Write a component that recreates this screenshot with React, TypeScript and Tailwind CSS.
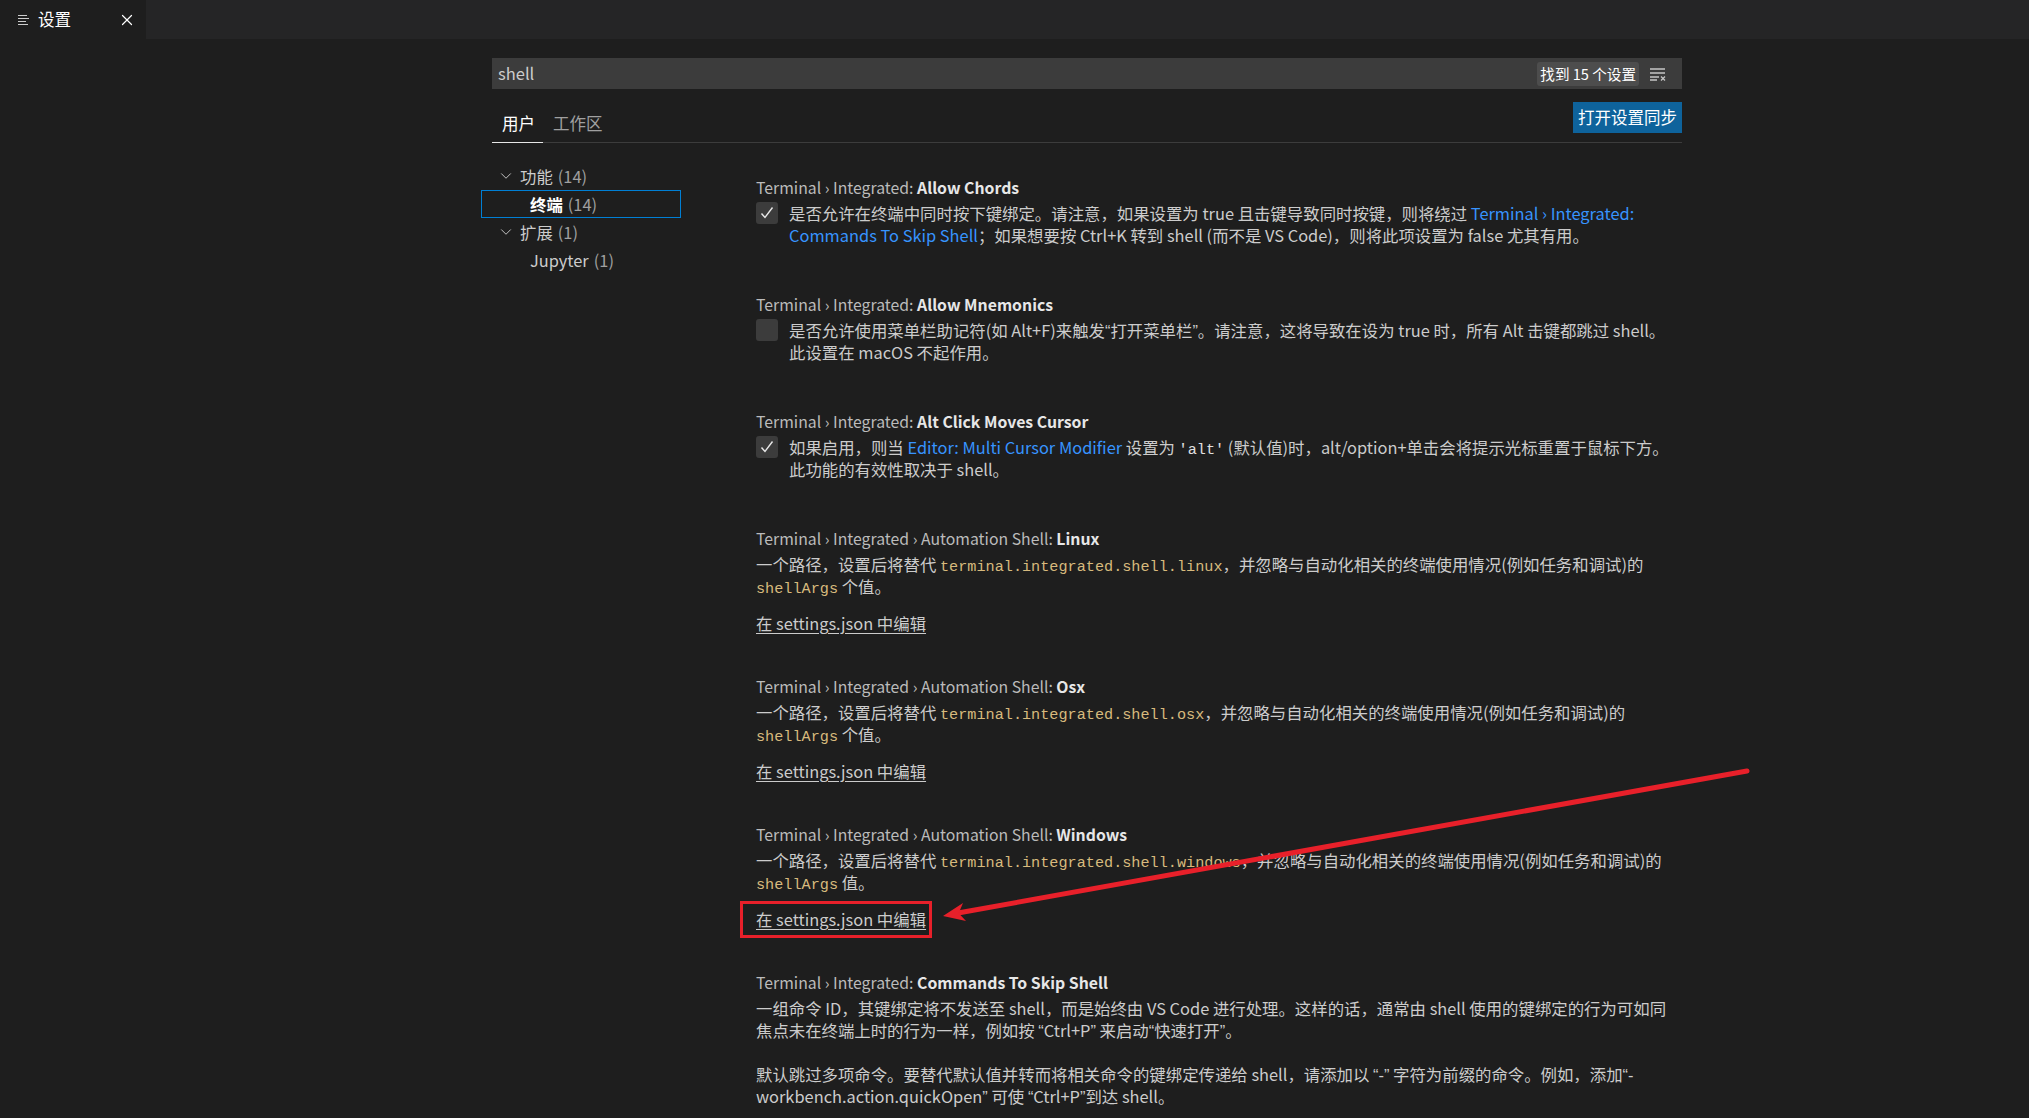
import React from 'react';
import { ChevronDown, X } from 'lucide-react';

const Code = ({ children }: { children: React.ReactNode }) => (
  <code className="font-['Liberation_Mono',monospace] text-[15.2px] leading-none text-[#d7ba7d]">{children}</code>
);

const Link = ({ children }: { children: React.ReactNode }) => <span className="text-[#3794ff]">{children}</span>;

// narrow latin quotes, like the original UI font
const Q = ({ children }: { children: React.ReactNode }) => (
  <span className="font-['Liberation_Sans',sans-serif]">{children}</span>
);

const Checkbox = ({ checked }: { checked: boolean }) => (
  <div className="w-[22px] h-[22px] shrink-0 mr-[11px] rounded-[3px] bg-[#3c3c3c] flex items-center justify-center">
    {checked && (
      <svg width="16" height="16" viewBox="0 0 16 16" fill="none">
        <path d="M2.5 8.5 L6 12.5 L13.5 2.5" stroke="#e8e8e8" strokeWidth="1.4" />
      </svg>
    )}
  </div>
);

interface SettingProps {
  category: string;
  name: string;
  checkbox?: 'on' | 'off';
  lines: React.ReactNode[];
  extra?: React.ReactNode[];
  jsonLink?: boolean;
  highlight?: boolean;
}

const Setting = ({ category, name, checkbox, lines, extra, jsonLink, highlight }: SettingProps) => (
  <div className={jsonLink ? 'pb-[42px]' : 'pb-[48px]'}>
    <div className="h-[22px] leading-[22px] text-[15.8px] text-[#bbbbbb] whitespace-nowrap">
      {category} <span className="font-bold text-[#e7e7e7]">{name}</span>
    </div>
    <div className="mt-[3px] flex">
      {checkbox && <Checkbox checked={checkbox === 'on'} />}
      <div className="text-[#cccccc] text-[16.4px]">
        {lines.map((l, i) => (
          <div key={i} className="h-[22px] leading-[22px] whitespace-nowrap">{l}</div>
        ))}
        {extra && (
          <div className="mt-[22px]">
            {extra.map((l, i) => (
              <div key={i} className="h-[22px] leading-[22px] whitespace-nowrap">{l}</div>
            ))}
          </div>
        )}
      </div>
    </div>
    {jsonLink && (
      <div className="mt-[15px] h-[22px] leading-[22px] relative">
        <span className="text-[16.4px] text-[#cccccc] underline underline-offset-[3px]">在 settings.json 中编辑</span>
        {highlight && (
          <span className="absolute left-[-16px] top-[-7px] w-[192px] h-[37px] border-[3px] border-[#e8202a]" />
        )}
      </div>
    )}
  </div>
);

const TocRow = ({ label, count, level, expanded, selected }: { label: string; count: number; level: number; expanded?: boolean; selected?: boolean }) => (
  <div
    className={`h-[28px] flex items-center text-[16.4px] ${level === 0 ? 'pl-[15px]' : 'pl-[48px]'} ${selected ? 'border border-[#007fd4]' : 'border border-transparent'}`}
  >
    {level === 0 && expanded && <ChevronDown size={18} strokeWidth={1.3} className="text-[#c5c5c5] mr-[5px]" />}
    <span className={selected ? 'font-bold text-white' : 'text-[#cccccc]'}>{label}</span>
    <span className="ml-[5px] text-[#a0a0a0]">({count})</span>
  </div>
);

export default function App() {
  return (
    <div className="relative w-[2029px] h-[1118px] overflow-hidden bg-[#1e1e1e] font-['Noto_Sans_CJK_SC',sans-serif]">
      {/* tab bar */}
      <div className="h-[39px] bg-[#252526] flex">
        <div className="w-[146px] bg-[#1e1e1e] flex items-center pl-[18px]">
          <svg width="12" height="12" viewBox="0 0 12 12" fill="none">
            <path d="M0 1.5 H9 M0 4.5 H11 M0 7.5 H8 M0 10.5 H10" stroke="#cccccc" strokeWidth="1.2" />
          </svg>
          <span className="ml-[8px] text-[16.5px] text-white">设置</span>
          <X size={18} strokeWidth={1.6} className="ml-auto mr-[10px] text-white" />
        </div>
      </div>

      <div className="pl-[481px]">
        {/* search + tabs */}
        <div className="ml-[11px] w-[1190px]">
          <div className="mt-[19px] h-[31px] bg-[#3c3c3c] flex items-center pl-[6px] pr-[15px]">
            <span className="text-[16.5px] text-[#cccccc]">shell</span>
            <span className="ml-auto h-[24px] px-[3px] rounded-[3px] bg-[#4d4d4d] text-white text-[14.6px] leading-[24px]">找到 15 个设置</span>
            <svg className="ml-[10px]" width="18" height="14" viewBox="0 0 18 14" fill="none">
              <path d="M1 2 H16 M1 6 H16 M1 10 H10 M1 13 H8" stroke="#c5c5c5" strokeWidth="1.3" />
              <path d="M12 9.5 L16 13.5 M16 9.5 L12 13.5" stroke="#c5c5c5" strokeWidth="1.3" />
            </svg>
          </div>
          <div className="h-[54px] flex items-end justify-between border-b border-[#3c3c3c]">
            <div className="flex text-[16.5px] leading-[22px]">
              <div className="pl-[10px] pr-[8px] pb-[8px] text-white border-b border-[#e7e7e7] mb-[-1px]">用户</div>
              <div className="pl-[10px] pr-[8px] pb-[8px] text-[#a0a0a0]">工作区</div>
            </div>
            <button className="mb-[9px] h-[31px] px-[5px] bg-[#0e639c] text-white text-[16.5px] leading-[31px]">打开设置同步</button>
          </div>
        </div>

        {/* body */}
        <div className="flex">
          <div className="w-[200px] pt-[19px] shrink-0">
            <TocRow label="功能" count={14} level={0} expanded />
            <TocRow label="终端" count={14} level={1} selected />
            <TocRow label="扩展" count={1} level={0} expanded />
            <TocRow label="Jupyter" count={1} level={1} />
          </div>
          <div className="ml-[75px] pt-[34px]">
            <Setting
              category="Terminal › Integrated:"
              name="Allow Chords"
              checkbox="on"
              lines={[
                <>是否允许在终端中同时按下键绑定。请注意，如果设置为 true 且击键导致同时按键，则将绕过 <Link>Terminal › Integrated:</Link></>,
                <><Link>Commands To Skip Shell</Link>；如果想要按 Ctrl+K 转到 shell (而不是 VS Code)，则将此项设置为 false 尤其有用。</>,
              ]}
            />
            <Setting
              category="Terminal › Integrated:"
              name="Allow Mnemonics"
              checkbox="off"
              lines={[
                <>是否允许使用菜单栏助记符(如 Alt+F)来触发<Q>“</Q>打开菜单栏<Q>”</Q>。请注意，这将导致在设为 true 时，所有 Alt 击键都跳过 shell。</>,
                <>此设置在 macOS 不起作用。</>,
              ]}
            />
            <Setting
              category="Terminal › Integrated:"
              name="Alt Click Moves Cursor"
              checkbox="on"
              lines={[
                <>如果启用，则当 <Link>Editor: Multi Cursor Modifier</Link> 设置为 <code className="font-['Liberation_Mono',monospace] text-[15.2px] leading-none text-[#e0e0e0]">'alt'</code> (默认值)时，alt/option+单击会将提示光标重置于鼠标下方。</>,
                <>此功能的有效性取决于 shell。</>,
              ]}
            />
            <Setting
              category="Terminal › Integrated › Automation Shell:"
              name="Linux"
              lines={[
                <>一个路径，设置后将替代 <Code>terminal.integrated.shell.linux</Code>，并忽略与自动化相关的终端使用情况(例如任务和调试)的</>,
                <><Code>shellArgs</Code> 个值。</>,
              ]}
              jsonLink
            />
            <Setting
              category="Terminal › Integrated › Automation Shell:"
              name="Osx"
              lines={[
                <>一个路径，设置后将替代 <Code>terminal.integrated.shell.osx</Code>，并忽略与自动化相关的终端使用情况(例如任务和调试)的</>,
                <><Code>shellArgs</Code> 个值。</>,
              ]}
              jsonLink
            />
            <Setting
              category="Terminal › Integrated › Automation Shell:"
              name="Windows"
              lines={[
                <>一个路径，设置后将替代 <Code>terminal.integrated.shell.windows</Code>，并忽略与自动化相关的终端使用情况(例如任务和调试)的</>,
                <><Code>shellArgs</Code> 值。</>,
              ]}
              jsonLink
              highlight
            />
            <Setting
              category="Terminal › Integrated:"
              name="Commands To Skip Shell"
              lines={[
                <>一组命令 ID，其键绑定将不发送至 shell，而是始终由 VS Code 进行处理。这样的话，通常由 shell 使用的键绑定的行为可如同</>,
                <>焦点未在终端上时的行为一样，例如按 <Q>“</Q>Ctrl+P<Q>”</Q> 来启动<Q>“</Q>快速打开<Q>”</Q>。</>,
              ]}
              extra={[
                <>默认跳过多项命令。要替代默认值并转而将相关命令的键绑定传递给 shell，请添加以 <Q>“-”</Q> 字符为前缀的命令。例如，添加<Q>“-</Q></>,
                <>workbench.action.quickOpen<Q>”</Q> 可使 <Q>“</Q>Ctrl+P<Q>”</Q>到达 shell。</>,
              ]}
            />
          </div>
        </div>
      </div>

      {/* red annotation arrow */}
      <svg className="absolute inset-0 pointer-events-none" width="2029" height="1118" viewBox="0 0 2029 1118">
        <line x1="1747" y1="771" x2="958" y2="913" stroke="#e8202a" strokeWidth="5" strokeLinecap="round" />
        <polygon points="943,916 963,903 958.7,913.2 966,921" fill="#e8202a" />
      </svg>
    </div>
  );
}
